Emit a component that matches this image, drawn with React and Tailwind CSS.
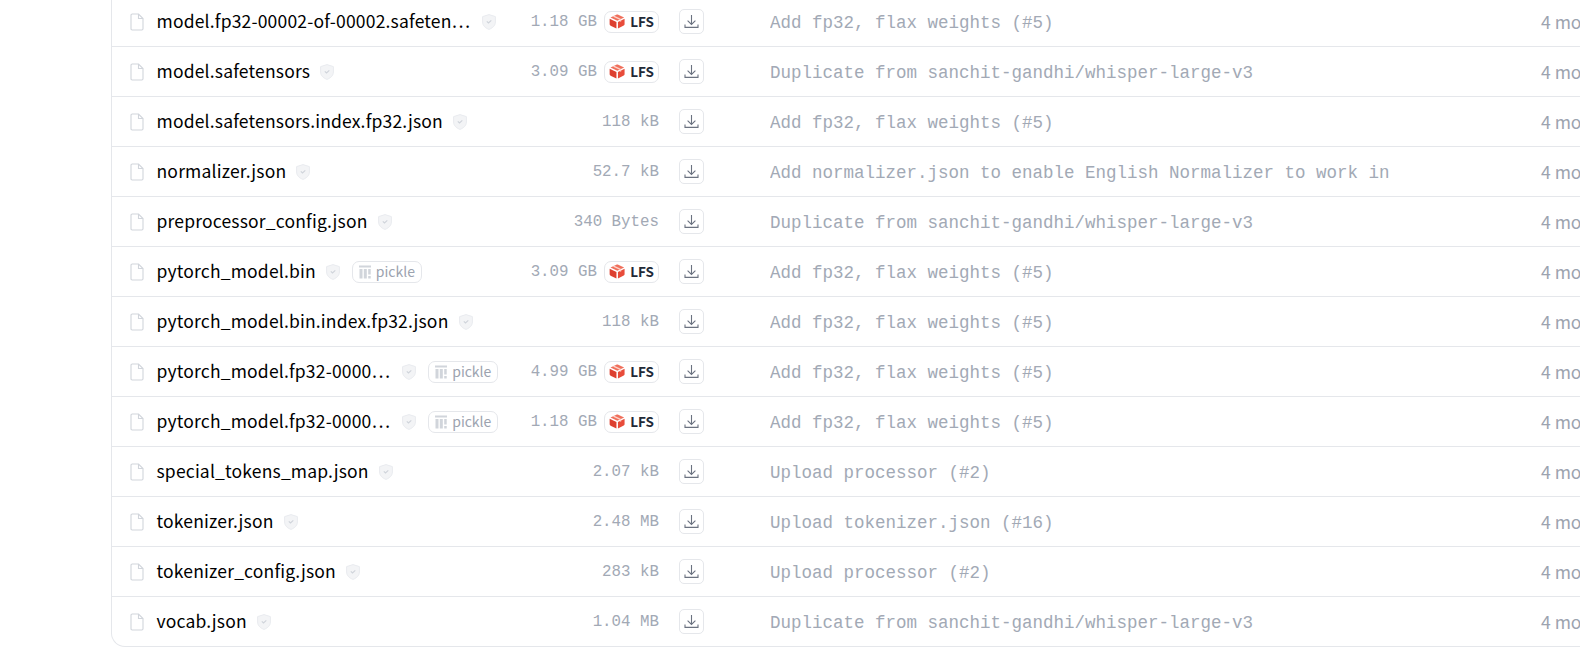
const files = [
  { name: "model.fp32-00002-of-00002.safeten…", size: "1.18 GB", lfs: true, cut: true, commit: "Add fp32, flax weights (#5)" },
  { name: "model.safetensors", size: "3.09 GB", lfs: true, commit: "Duplicate from sanchit-gandhi/whisper-large-v3" },
  { name: "model.safetensors.index.fp32.json", size: "118 kB", commit: "Add fp32, flax weights (#5)" },
  { name: "normalizer.json", size: "52.7 kB", commit: "Add normalizer.json to enable English Normalizer to work in" },
  { name: "preprocessor_config.json", size: "340 Bytes", commit: "Duplicate from sanchit-gandhi/whisper-large-v3" },
  { name: "pytorch_model.bin", size: "3.09 GB", lfs: true, pickle: true, commit: "Add fp32, flax weights (#5)" },
  { name: "pytorch_model.bin.index.fp32.json", size: "118 kB", commit: "Add fp32, flax weights (#5)" },
  { name: "pytorch_model.fp32-0000…", size: "4.99 GB", lfs: true, pickle: true, cut: true, commit: "Add fp32, flax weights (#5)" },
  { name: "pytorch_model.fp32-0000…", size: "1.18 GB", lfs: true, pickle: true, cut: true, commit: "Add fp32, flax weights (#5)" },
  { name: "special_tokens_map.json", size: "2.07 kB", commit: "Upload processor (#2)" },
  { name: "tokenizer.json", size: "2.48 MB", commit: "Upload tokenizer.json (#16)" },
  { name: "tokenizer_config.json", size: "283 kB", commit: "Upload processor (#2)" },
  { name: "vocab.json", size: "1.04 MB", commit: "Duplicate from sanchit-gandhi/whisper-large-v3" },
];

const FileIcon = () => (
  <svg width="14" height="18" viewBox="0 0 14 18" fill="none" className="shrink-0">
    <path d="M1 2.2C1 1.5 1.5 1 2.2 1H8.5L13 5.5V15.8C13 16.5 12.5 17 11.8 17H2.2C1.5 17 1 16.5 1 15.8V2.2Z" stroke="#d1d5db" strokeWidth="1.1" fill="#fff" />
    <path d="M8.5 1V5.5H13" stroke="#d1d5db" strokeWidth="1.1" fill="none" />
  </svg>
);

const ShieldIcon = () => (
  <svg width="14" height="16" viewBox="0 0 14 16" className="block shrink-0">
    <path d="M7 .6 13.4 2.6V8c0 3.4-2.6 6-6.4 7.4C3.2 14 .6 11.4.6 8V2.6L7 .6Z" fill="#f3f4f6" stroke="#e9ebef" strokeWidth="1" />
    <path d="M4.8 7.4 6.5 9 9.3 6.4" fill="none" stroke="#cfd3da" strokeWidth="1.1" />
  </svg>
);

const LfsIcon = () => (
  <svg width="16" height="15" viewBox="0 0 15 14" className="shrink-0">
    <path d="M8.2.4C8 .3 7.7.3 7.4.4L1.4 3.2 7.8 6.2 14.2 3.3Z" fill="#f0705c" />
    <path d="M.6 4.4 7 7.4V13.6L1.5 10.9C.9 10.6.6 10.2.6 9.6Z" fill="#dd4030" />
    <path d="M8.4 7.4 14.6 4.5V9.6C14.6 10.1 14.3 10.6 13.8 10.8L8.4 13.6Z" fill="#e84c3a" />
    <path d="M4.2 2 10.8 5V7" fill="none" stroke="#fbd5cd" strokeWidth="1.2" />
  </svg>
);

const PickleIcon = () => (
  <svg width="12" height="14" viewBox="0 0 12 14" className="shrink-0">
    <rect x="0" y="0.5" width="12" height="2" fill="#d1d5db" />
    <rect x="0.5" y="4" width="3" height="9.5" fill="#d1d5db" />
    <rect x="4.8" y="4" width="3" height="9.5" fill="#d1d5db" />
    <rect x="9.2" y="4" width="2.5" height="5.5" fill="#d1d5db" />
    <rect x="9.2" y="11" width="2.5" height="2.5" fill="#d1d5db" />
  </svg>
);

const DownloadIcon = () => (
  <svg width="15" height="15" viewBox="0 0 15 15" fill="none" stroke="#6b7280" strokeWidth="1.1">
    <path d="M7.5 1V10.2M3.6 6.6 7.5 10.5 11.4 6.6M1 10.5V13.4H14V10.5" />
  </svg>
);

const FileRow = ({ file, last }) => (
  <div className={`flex items-center ${last ? "h-[49px]" : "h-[50px] border-b border-[#e5e7eb]"}`}>
    <div className="flex w-[400px] shrink-0 items-center pl-[18px]">
      <FileIcon />
      <span className="ml-[12.5px] whitespace-nowrap text-[17.5px] tracking-[0.18px] text-black">{file.name}</span>
      <span className={file.cut ? "ml-[12px]" : "ml-[10px]"}><ShieldIcon /></span>
      {file.pickle && (
        <span className="ml-[12px] flex h-[22px] items-center gap-[5px] rounded-[7px] border border-[#e5e7eb] px-[6px] text-[14px] text-[#9ca3af]">
          <PickleIcon />
          pickle
        </span>
      )}
    </div>
    <div className="flex w-[147px] shrink-0 items-center justify-end">
      <span className="whitespace-nowrap pt-[3px] text-[15.8px] text-[#a2a9b5]" style={{ fontFamily: '"Liberation Mono", monospace' }}>{file.size}</span>
      {file.lfs && (
        <span className="ml-[7px] flex h-[22px] w-[55px] shrink-0 items-center justify-center gap-[5px] rounded-[7px] border border-[#e5e7eb] text-[13.5px] font-semibold text-[#1f2937]">
          <LfsIcon />
          LFS
        </span>
      )}
    </div>
    <div className="ml-[20px] flex h-[25px] w-[25px] shrink-0 items-center justify-center rounded-[5px] border border-[#e5e7eb]">
      <DownloadIcon />
    </div>
    <div className="ml-[66px] w-[771px] shrink-0 truncate pt-[3px] text-[17.5px] text-[#a2a9b5]" style={{ fontFamily: '"Liberation Mono", monospace' }}>
      {file.commit}
    </div>
    <div className="whitespace-nowrap pt-[1px] text-[17.5px] text-[#9ca3af]">4 months ago</div>
  </div>
);

export default function App() {
  return (
    <div className="h-[649px] overflow-hidden bg-white" style={{ fontFamily: '"Noto Sans CJK SC", sans-serif' }}>
      <div className="-mt-[3px] ml-[111px] w-[1700px] rounded-bl-[14px] border-b border-l border-[#e5e7eb]">
        {files.map((file, index) => (
          <FileRow key={index} file={file} last={index === files.length - 1} />
        ))}
      </div>
    </div>
  );
}
